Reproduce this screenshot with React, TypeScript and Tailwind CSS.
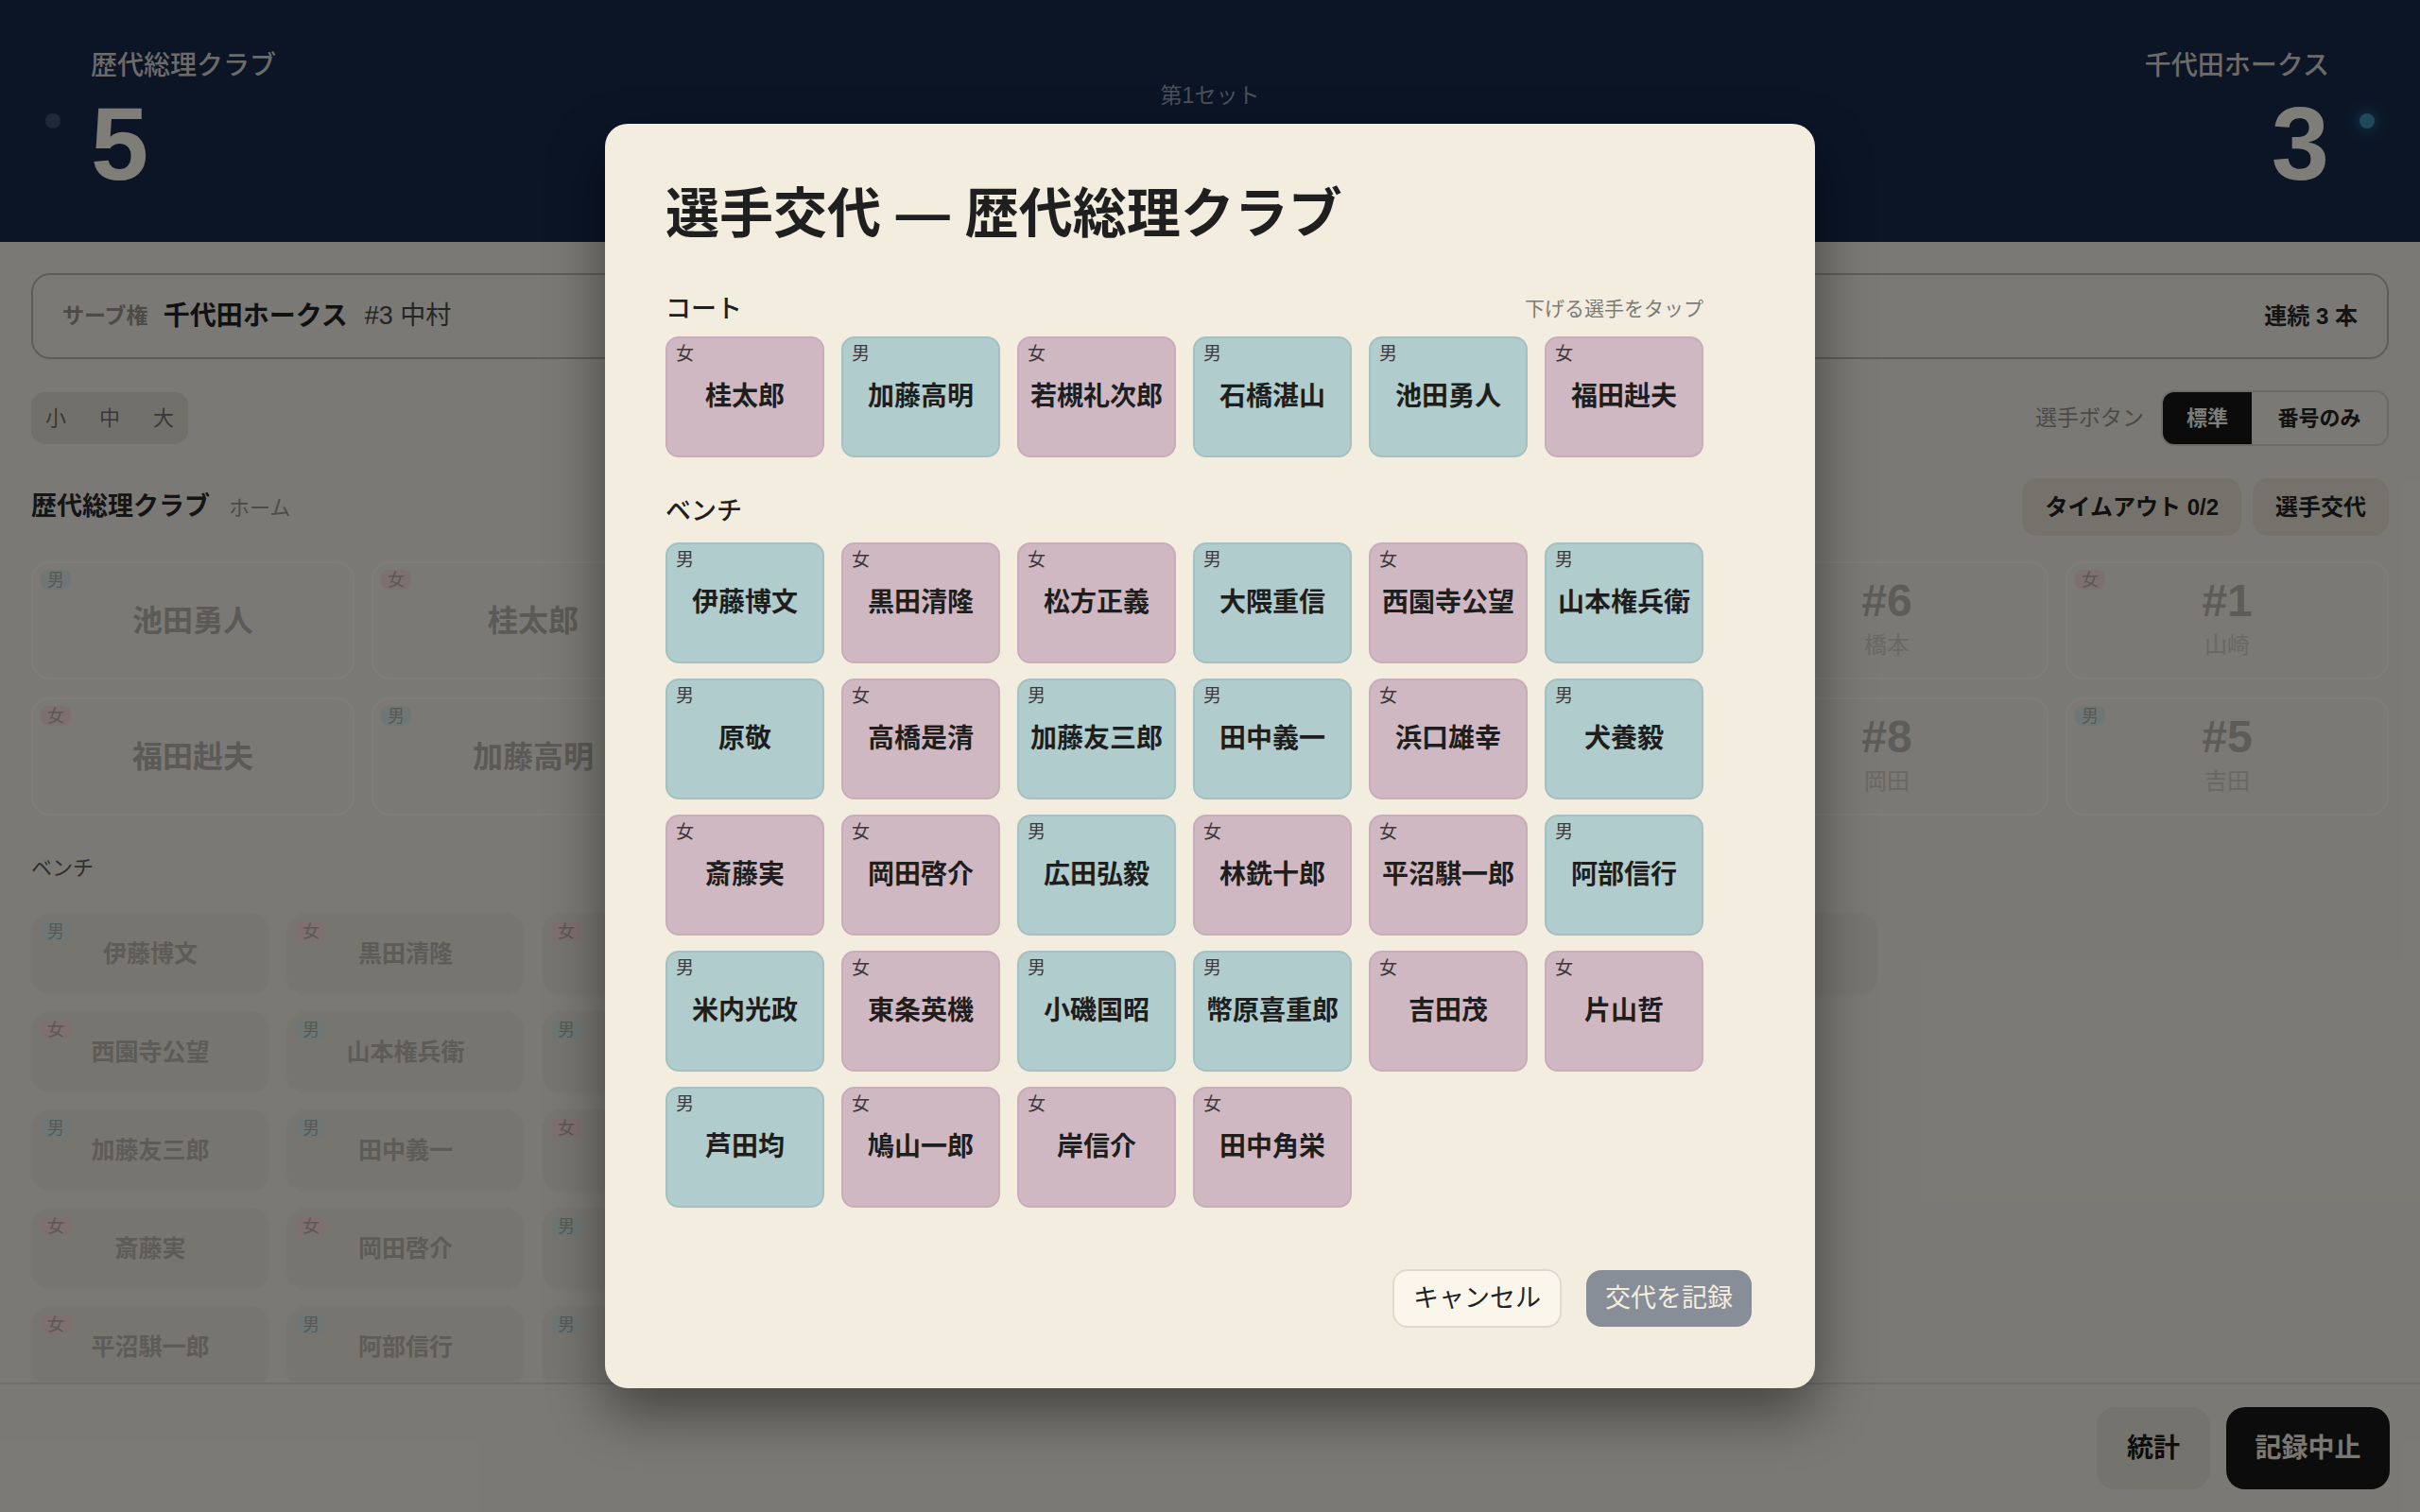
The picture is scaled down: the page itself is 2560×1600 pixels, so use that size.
import React from "react";

type P = [string, "男" | "女"];

const modalCourt: P[] = [
  ["桂太郎", "女"],
  ["加藤高明", "男"],
  ["若槻礼次郎", "女"],
  ["石橋湛山", "男"],
  ["池田勇人", "男"],
  ["福田赳夫", "女"],
];

const bench: P[] = [
  ["伊藤博文", "男"], ["黒田清隆", "女"], ["松方正義", "女"], ["大隈重信", "男"], ["西園寺公望", "女"], ["山本権兵衛", "男"],
  ["原敬", "男"], ["高橋是清", "女"], ["加藤友三郎", "男"], ["田中義一", "男"], ["浜口雄幸", "女"], ["犬養毅", "男"],
  ["斎藤実", "女"], ["岡田啓介", "女"], ["広田弘毅", "男"], ["林銑十郎", "女"], ["平沼騏一郎", "女"], ["阿部信行", "男"],
  ["米内光政", "男"], ["東条英機", "女"], ["小磯国昭", "男"], ["幣原喜重郎", "男"], ["吉田茂", "女"], ["片山哲", "女"],
  ["芦田均", "男"], ["鳩山一郎", "女"], ["岸信介", "女"], ["田中角栄", "女"],
];

const homeCourt: P[] = [
  ["池田勇人", "男"],
  ["桂太郎", "女"],
  ["石橋湛山", "男"],
  ["福田赳夫", "女"],
  ["加藤高明", "男"],
  ["若槻礼次郎", "女"],
];

const awayCourt: { no: string; name: string; g: "男" | "女" }[] = [
  { no: "#3", name: "中村", g: "男" },
  { no: "#6", name: "橋本", g: "男" },
  { no: "#1", name: "山崎", g: "女" },
  { no: "#2", name: "佐藤", g: "男" },
  { no: "#8", name: "岡田", g: "女" },
  { no: "#5", name: "吉田", g: "男" },
];

const awayBench: { no: string; name: string; g: "男" | "女" }[] = [
  { no: "#4", name: "田村", g: "男" },
  { no: "#7", name: "小林", g: "女" },
];

function Badge({ g, small }: { g: "男" | "女"; small?: boolean }) {
  return (
    <span
      className={
        "absolute left-[8px] flex items-center justify-center rounded-[8px] px-[7px] leading-none text-[#b3b2ac] " +
        (small ? "top-[7px] h-[21px] text-[18px] " : "top-[7px] h-[21px] text-[18px] ") +
        (g === "男" ? "bg-[#dcefed]" : "bg-[#fcdfe0]")
      }
    >
      {g}
    </span>
  );
}

function TeamHeaderButtons() {
  return (
    <div className="flex items-center gap-[12px]">
      <button className="h-[61px] rounded-[16px] bg-[#ebe5d8] px-[24px] text-[24px] font-bold text-[#222]">
        タイムアウト 0/2
      </button>
      <button className="h-[61px] rounded-[16px] bg-[#ebe5d8] px-[24px] text-[24px] font-bold text-[#222]">
        選手交代
      </button>
    </div>
  );
}

function ModalCard({ p }: { p: P }) {
  const male = p[1] === "男";
  return (
    <div
      className={
        "relative flex h-[128px] items-center justify-center rounded-[14px] border-2 " +
        (male ? "border-[#a4c0c1] bg-[#b1cccd]" : "border-[#c7adb9] bg-[#d0b8c2]")
      }
    >
      <span className="absolute left-[9px] top-[7px] text-[19px] leading-none text-[#3a3a3a]">{p[1]}</span>
      <span className="text-[28px] font-bold leading-none text-[#1e1e1e]">{p[0]}</span>
    </div>
  );
}

export default function App() {
  return (
    <div className="relative flex h-[1600px] w-[2560px] flex-col overflow-hidden bg-[#f5f3ea] font-['Liberation_Sans','Noto_Sans_CJK_JP',sans-serif]">
      {/* Scoreboard header */}
      <header className="grid h-[256px] shrink-0 grid-cols-3 bg-[#162a4c] px-[48px]">
        <div className="flex items-start gap-[32px]">
          <span className="mt-[120px] h-[16px] w-[16px] rounded-full bg-[#3c5274]" />
          <div className="flex flex-col pt-[56px]">
            <span className="text-[28px] font-medium leading-none text-[#d8d7d2]">歴代総理クラブ</span>
            <span className="mt-[13px] text-[110px] font-bold leading-none text-[#fffbef]">5</span>
          </div>
        </div>
        <div className="pt-[90px] text-center text-[23px] leading-none text-[#97a1b3]">第1セット</div>
        <div className="flex items-start justify-end gap-[32px]">
          <div className="flex flex-col items-end pt-[56px]">
            <span className="text-[28px] font-medium leading-none text-[#d8d7d2]">千代田ホークス</span>
            <span className="mt-[13px] text-[110px] font-bold leading-none text-[#fffbef]">3</span>
          </div>
          <span className="mt-[120px] h-[16px] w-[16px] rounded-full bg-[#3c94b8] shadow-[0_0_14px_4px_rgba(60,148,184,0.45)]" />
        </div>
      </header>

      {/* Main */}
      <main className="flex-1 overflow-hidden px-[33px] pt-[33px]">
        <div className="flex h-[91px] items-center justify-between rounded-[20px] border-2 border-[#bebbb2] px-[31px]">
          <div className="flex items-center">
            <span className="text-[23px] font-semibold text-[#99968e]">サーブ権</span>
            <span className="ml-[16px] text-[28px] font-bold text-[#222]">千代田ホークス</span>
            <span className="ml-[18px] text-[27px] text-[#4a4a4a]">#3 中村</span>
          </div>
          <span className="text-[24px] font-bold text-[#282828]">連続 3 本</span>
        </div>

        <div className="mt-[33px] flex h-[59px] items-center justify-between">
          <div className="flex h-[55px] w-[166px] items-center gap-[35px] rounded-[14px] bg-[#e5e0d5] px-[15px] text-[22px] text-[#72716c]">
            <span>小</span>
            <span>中</span>
            <span>大</span>
          </div>
          <div className="flex items-center">
            <span className="mr-[18px] text-[23px] text-[#97958d]">選手ボタン</span>
            <div className="flex h-[59px] overflow-hidden rounded-[14px] border-2 border-[#dbd7cc]">
              <span className="flex w-[94px] items-center justify-center bg-[#161616] text-[22px] font-bold text-[#fbf8ef]">
                標準
              </span>
              <span className="flex w-[143px] items-center justify-center text-[22px] font-bold text-[#222]">番号のみ</span>
            </div>
          </div>
        </div>

        <div className="mt-[34px] grid grid-cols-[1062px_1fr_1062px]">
          {/* Home team */}
          <section>
            <div className="flex h-[61px] items-center justify-between">
              <div className="flex items-baseline">
                <span className="text-[27px] font-bold text-[#2a2a2a]">歴代総理クラブ</span>
                <span className="ml-[20px] text-[22px] text-[#9a988f]">ホーム</span>
              </div>
              <TeamHeaderButtons />
            </div>
            <div className="mt-[27px] grid grid-cols-3 gap-x-[18px] gap-y-[19px]">
              {homeCourt.map((p) => (
                <div
                  key={p[0]}
                  className="relative flex h-[125px] items-center justify-center rounded-[20px] border-2 border-[#fcfaf2] bg-[#f5f3ea]"
                >
                  <Badge g={p[1]} />
                  <span className="text-[32px] font-bold leading-none text-[#b7b5ad]">{p[0]}</span>
                </div>
              ))}
            </div>
            <div className="mt-[40px] text-[22px] leading-[32px] text-[#5e5d5a]">ベンチ</div>
            <div className="mt-[31px] grid grid-cols-4 gap-x-[18px] gap-y-[17px]">
              {bench.map((p) => (
                <div
                  key={p[0]}
                  className="relative flex h-[87px] items-center justify-center rounded-[20px] border-2 border-[#f0ece2] bg-[#eeebe1]"
                >
                  <Badge g={p[1]} small />
                  <span className="text-[25px] font-bold leading-none text-[#bab8b0]">{p[0]}</span>
                </div>
              ))}
            </div>
          </section>

          <div />

          {/* Away team */}
          <section>
            <div className="flex h-[61px] items-center justify-between">
              <div className="flex items-baseline">
                <span className="text-[27px] font-bold text-[#2a2a2a]">千代田ホークス</span>
                <span className="ml-[20px] text-[22px] text-[#9a988f]">アウェイ</span>
              </div>
              <TeamHeaderButtons />
            </div>
            <div className="mt-[27px] grid grid-cols-3 gap-x-[18px] gap-y-[19px]">
              {awayCourt.map((p) => (
                <div
                  key={p.no}
                  className="relative flex h-[125px] flex-col items-center justify-center rounded-[20px] border-2 border-[#fcfaf2] bg-[#f5f3ea] pb-[6px]"
                >
                  <Badge g={p.g} />
                  <span className="text-[48px] font-bold leading-none text-[#bbb8b0]">{p.no}</span>
                  <span className="mt-[11px] text-[24px] leading-none text-[#d3d1c9]">{p.name}</span>
                </div>
              ))}
            </div>
            <div className="mt-[40px] text-[22px] leading-[32px] text-[#5e5d5a]">ベンチ</div>
            <div className="mt-[31px] grid grid-cols-4 gap-x-[18px] gap-y-[17px]">
              {awayBench.map((p) => (
                <div
                  key={p.no}
                  className="relative flex h-[87px] items-center justify-center rounded-[20px] border-2 border-[#f0ece2] bg-[#eeebe1]"
                >
                  <Badge g={p.g} small />
                  <span className="text-[25px] font-bold leading-none text-[#bab8b0]">
                    {p.no} {p.name}
                  </span>
                </div>
              ))}
            </div>
          </section>
        </div>
      </main>

      {/* Bottom bar */}
      <footer className="flex h-[137px] shrink-0 items-center justify-end gap-[17px] border-t-2 border-[#dddad1] px-[32px]">
        <button className="h-[87px] w-[120px] rounded-[20px] bg-[#ebe7dc] text-[28px] font-bold text-[#1a1a1a]">統計</button>
        <button className="h-[87px] w-[173px] rounded-[20px] bg-[#181818] text-[28px] font-bold text-[#f4f0e6]">記録中止</button>
      </footer>

      {/* Overlay + modal */}
      <div className="absolute inset-0 flex items-center justify-center bg-black/50">
        <div className="w-[1280px] rounded-[24px] bg-[#f3ede0] p-[64px] shadow-[0_25px_60px_rgba(0,0,0,0.45)]">
          <h1 className="text-[57px] font-bold leading-[62px] text-[#1f1f1f]">選手交代 — 歴代総理クラブ</h1>

          <div className="w-[1098px]">
            <div className="mt-[53px] flex h-[34px] items-center justify-between">
              <span className="text-[27px] font-medium text-[#1f1f1f]">コート</span>
              <span className="text-[21px] text-[#7b7a76]">下げる選手をタップ</span>
            </div>
            <div className="mt-[12px] grid grid-cols-[repeat(6,168px)] gap-x-[18px] gap-y-[16px]">
              {modalCourt.map((p) => (
                <ModalCard key={p[0]} p={p} />
              ))}
            </div>

            <div className="mt-[40px] flex h-[34px] items-center">
              <span className="text-[27px] font-medium text-[#1f1f1f]">ベンチ</span>
            </div>
            <div className="mt-[16px] grid grid-cols-[repeat(6,168px)] gap-x-[18px] gap-y-[16px]">
              {bench.map((p) => (
                <ModalCard key={p[0]} p={p} />
              ))}
            </div>
          </div>

          <div className="mr-[3px] mt-[65px] flex items-center justify-end gap-[26px]">
            <button className="h-[62px] w-[179px] rounded-[16px] border-2 border-[#e0dacd] bg-[#faf6ec] text-[27px] text-[#222]">
              キャンセル
            </button>
            <button className="h-[60px] w-[175px] rounded-[16px] bg-[#878e97] text-[27px] text-[#f3ede0]">
              交代を記録
            </button>
          </div>
        </div>
      </div>
    </div>
  );
}
